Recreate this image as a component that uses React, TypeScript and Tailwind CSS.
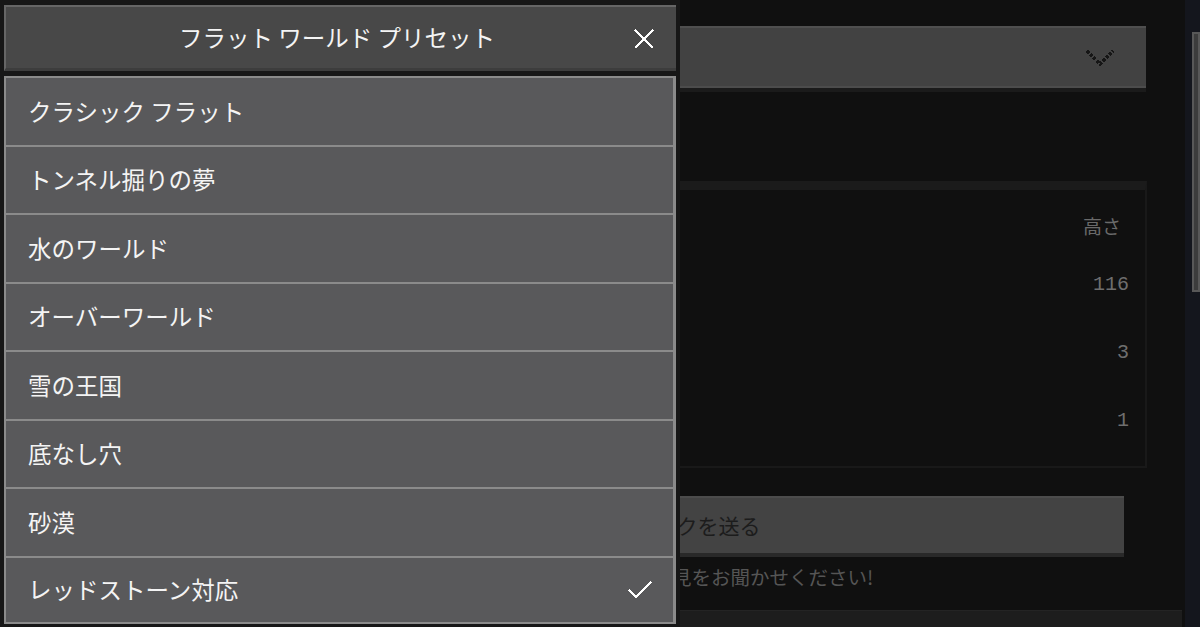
import React from "react";

const presets = [
  "クラシック フラット",
  "トンネル掘りの夢",
  "水のワールド",
  "オーバーワールド",
  "雪の王国",
  "底なし穴",
  "砂漠",
  "レッドストーン対応",
];

const selectedIndex = 7;

const layerHeights = ["116", "3", "1"];

const CloseIcon = () => (
  <svg width="20" height="20" viewBox="0 0 20 20" shapeRendering="crispEdges">
    <path d="M1 1 L19 19 M19 1 L1 19" stroke="#ffffff" strokeWidth="2" fill="none" />
  </svg>
);

const CheckIcon = () => (
  <svg width="24" height="18" viewBox="0 0 24 18" shapeRendering="crispEdges">
    <polyline points="1,9 8,16 23,1" stroke="#ffffff" strokeWidth="2" fill="none" />
  </svg>
);

const ChevronIcon = () => (
  <svg width="28" height="17" viewBox="0 0 28 17" shapeRendering="crispEdges">
    <polyline points="1,2 14,15 27,2" stroke="#161616" strokeWidth="3" fill="none" strokeDasharray="3 1.5" />
  </svg>
);

export default function App() {
  return (
    <div className="relative w-[1200px] h-[627px] overflow-hidden bg-[#101010] flex font-['Noto_Sans_CJK_JP','Noto_Sans',sans-serif]">
      {/* background settings screen */}
      <div className="flex-1 flex flex-col pl-[30px]">
        <div className="mt-[26px] mr-[39px] border-b-4 border-[#1b1b1b]">
          <div className="h-[62px] bg-[#424242] border-t-2 border-[#4f4f4f] border-b-2 border-b-[#4c4c4c] flex items-center justify-end pr-[32px]">
            <ChevronIcon />
          </div>
        </div>

        <div className="mt-[89px] mr-[38px] h-[287px] border-t-[9px] border-[#1b1b1b] border-r-2 border-r-[#191919] border-b-2 border-b-[#191919] flex flex-col pt-[11px] pr-[16px]">
          <div className="h-[50px] flex items-center justify-end pr-[8px] text-[19px] text-[#6a6a6a]">高さ</div>
          {layerHeights.map((h, i) => (
            <div key={i} className="h-[68px] flex items-center justify-end font-['Liberation_Mono',monospace] text-[20px] text-[#6e6e6e]">
              {h}
            </div>
          ))}
        </div>

        <div className="mt-[28px] mr-[61px] border-b-4 border-[#292929]">
          <div className="h-[57px] bg-[#434343] border-t-2 border-[#4c4c4c] flex items-center pl-[521px] text-[21px] text-[#1c1c1c] whitespace-nowrap">
            フィードバックを送る
          </div>
        </div>
        <div className="mt-[5px] pl-[603px] text-[19.5px] text-[#555555] whitespace-nowrap">ご意見をお聞かせください!</div>

        <div className="mt-auto mr-[3px] h-[17px] bg-[#1d1d1d] border-t border-[#242424]" />
      </div>

      <div className="w-[15px] bg-[#14161d] flex flex-col">
        <div className="mt-[32px] ml-[7px] h-[260px] border-2 border-[#585858] bg-[#3c3c3c]" />
      </div>

      {/* preset dialog */}
      <div className="absolute left-0 top-0 w-[680px] h-[627px] bg-[#171717] pt-[5px] pl-[4px] pr-[4px] flex flex-col">
        <div className="relative h-[66px] bg-[#484848] border-t-2 border-l-2 border-[#666666] border-b-[3px] border-b-[#3d3d3d] flex items-center justify-center pr-[8px] text-[23.5px] text-[#f4f4f4] whitespace-nowrap">
          フラット ワールド プリセット
          <div className="absolute right-[22px] top-[22px]">
            <CloseIcon />
          </div>
        </div>
        <div className="h-[5px]" />
        {presets.map((name, i) => (
          <div
            key={name}
            className={`h-[68.5px] shrink-0 bg-[#59595b] border-t-2 border-l-2 border-r-[3px] border-[#8b8b8b] flex items-center justify-between pl-[22px] pr-[21px] text-[23.5px] text-[#f4f4f4] ${
              i === presets.length - 1 ? "border-b-2" : ""
            }`}
          >
            <span>{name}</span>
            {i === selectedIndex && <CheckIcon />}
          </div>
        ))}
      </div>
    </div>
  );
}
